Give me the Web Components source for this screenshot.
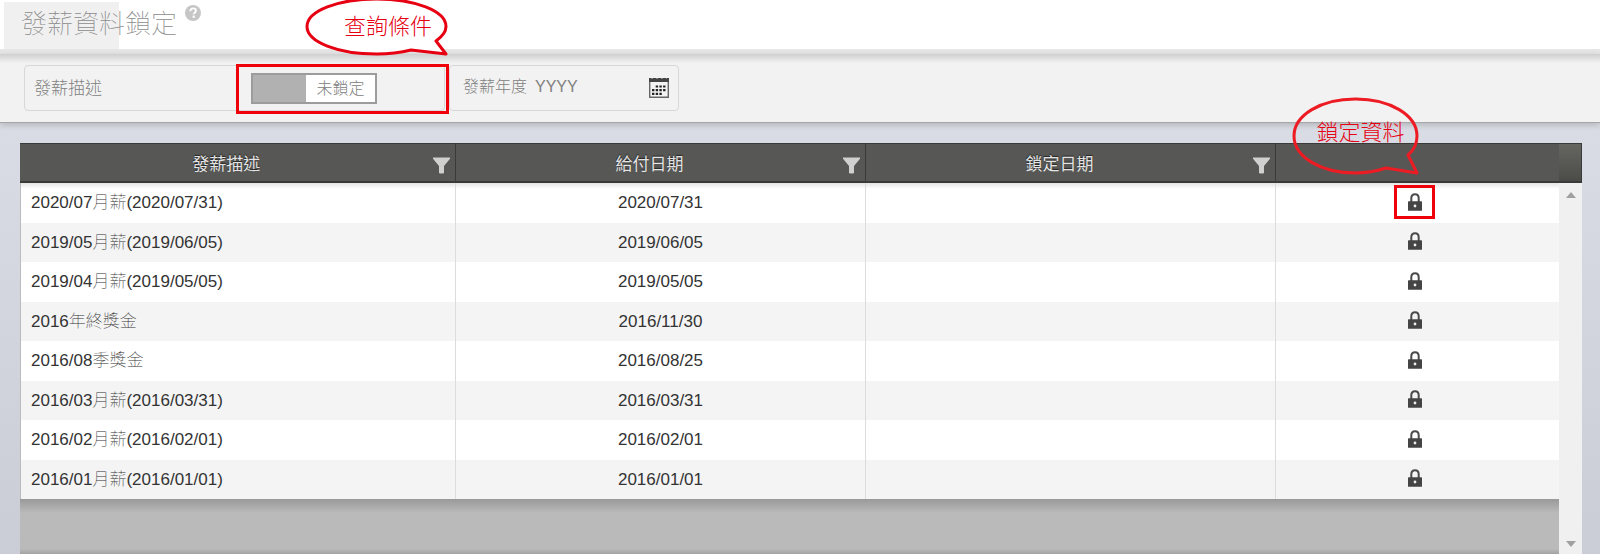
<!DOCTYPE html>
<html lang="zh-Hant">
<head>
<meta charset="UTF-8">
<meta name="viewport" content="width=device-width, initial-scale=1">
<title>發薪資料鎖定</title>
<style>
    body {
        margin: 0;
        min-height: 100vh;
        display: flex;
        flex-direction: column;
        overflow-x: hidden;
        font-family: "Liberation Sans", "Noto Sans CJK TC", sans-serif;
        font-size: 17px;
        background: linear-gradient(#d9dce4 130px, #cacdd5);
    }
</style>
</head>
<body>
    <page-title>發薪資料鎖定</page-title>

    <filter-bar>
        <text-field placeholder="發薪描述" wide>
            <toggle-switch>未鎖定</toggle-switch>
        </text-field>
        <text-field label="發薪年度" placeholder="YYYY" calendar></text-field>
    </filter-bar>

    <pay-grid></pay-grid>

    <script>
    const icons = {
        help: `<svg width="16" height="16" viewBox="0 0 16 16"><circle cx="8" cy="8" r="8" fill="#c6c6c6"/><path d="M5.3 6.2C5.3 4.4 6.5 3.4 8.1 3.4c1.6 0 2.8.9 2.8 2.3 0 1.9-2.2 1.9-2.2 3.6" fill="none" stroke="#fff" stroke-width="1.9"/><rect x="7.6" y="10.6" width="2.2" height="2.2" fill="#fff"/></svg>`,
        filter: `<svg width="17" height="17" viewBox="0 0 17 17"><path d="M0 .5h17v1.2L11 9V16l-1 .5H7L6 16V9L0 1.7z" fill="#d0d0d0"/></svg>`,
        lock: `<svg width="14" height="18" viewBox="0 0 14 18"><path d="M3.3 9V5.2C3.3 2.7 4.8 1.2 7 1.2s3.7 1.5 3.7 4V9" fill="none" stroke="#4a4a4a" stroke-width="2"/><rect x="0" y="8.3" width="14" height="9.5" rx=".6" fill="#444"/><circle cx="7" cy="13" r="1.4" fill="#eee"/></svg>`,
        calendar: `<svg width="20" height="21" viewBox="0 0 20 21"><path d="M.7 2h18.6v18.3H.7z" fill="#f4f4f4" stroke="#666" stroke-width="1.4"/><path d="M0 1h2v1h2V1h3v1h2V1h3v1h2V1h3v1h1V1h2v4H0z" fill="#444"/><path d="M6.7 9.5h10M3 13.2H17M3 16.9H13" stroke="#222" stroke-width="2.2" stroke-dasharray="2.4 1.3" fill="none"/></svg>`
    }

    class PageTitle extends HTMLElement {
        constructor() {
            super()
            const shadow = this.attachShadow({mode: 'open'})
            shadow.innerHTML = `
                <style>
                    :host {
                        display: block;
                        background: #fff;
                        border-bottom: 5px solid #e6e6e6;
                        color: #8c8c8c;
                    }
                    header {
                        display: flex;
                        align-items: flex-start;
                        gap: 8px;
                        height: 49px;
                        padding-left: 21px;
                        background: linear-gradient(#f0f0f0, #f0f0f0) 4px 2px / 115px 48px no-repeat;
                    }
                    h1 {
                        margin: 0;
                        padding-top: 6px;
                        font-size: 26px;
                        line-height: 36px;
                        font-weight: 100;
                    }
                    a { display: flex; padding-top: 5px; }
                </style>
                <header>
                    <h1><slot></slot></h1>
                    <a href="#help" aria-label="說明">${icons.help}</a>
                </header>
            `
        }
    }
    customElements.define('page-title', PageTitle)

    class FilterBar extends HTMLElement {
        constructor() {
            super()
            const shadow = this.attachShadow({mode: 'open'})
            shadow.innerHTML = `
                <style>
                    :host {
                        display: flex;
                        gap: 4px;
                        padding: 11px 24px;
                        background: linear-gradient(#cfcfcf, #f2f2f2 9px);
                        border-bottom: 1px solid #a6a6a6;
                        box-shadow: 0 2px 6px rgba(0, 0, 0, .18);
                    }
                </style>
                <slot></slot>
            `
        }
    }
    customElements.define('filter-bar', FilterBar)

    class TextField extends HTMLElement {
        constructor() {
            super()
            this.attachShadow({mode: 'open'})
        }
        connectedCallback() {
            const label = this.getAttribute('label')
            const placeholder = this.getAttribute('placeholder')
            this.shadowRoot.innerHTML = `
                <style>
                    :host {
                        display: flex;
                        align-items: center;
                        box-sizing: border-box;
                        width: 230px;
                        height: 46px;
                        padding: 0 9px;
                        border: 1px solid #d8d8d8;
                        border-radius: 4px;
                        color: #808080;
                        font-size: 16px;
                        font-weight: 300;
                    }
                    :host([wide]) { width: 421px; font-size: 17px; }
                    :host(:not([wide])) { padding-left: 13px; }
                    label { flex: none; margin-right: 8px; line-height: 40px; padding-bottom: 2px; }
                    input {
                        flex: 1;
                        min-width: 0;
                        height: 40px;
                        box-sizing: border-box;
                        padding: 0 0 2px;
                        border: 0;
                        outline: 0;
                        background: none;
                        font: inherit;
                        color: inherit;
                    }
                    :host([wide]) input { padding: 2px 0 0; }
                    input::placeholder { color: #808080; opacity: 1; }
                    button { display: flex; padding: 0 0 2px; border: 0; background: none; }
                </style>
                ${label ? `<label for="campo">${label}</label>` : ''}
                <input id="campo" type="text" placeholder="${placeholder}" ${label ? '' : `aria-label="${placeholder}"`}>
                ${this.hasAttribute('calendar') ? `<button type="button" aria-label="日曆">${icons.calendar}</button>` : ''}
                <slot></slot>
            `
        }
    }
    customElements.define('text-field', TextField)

    // ellipse with a tail at the lower right corner
    class CallOut extends HTMLElement {
        constructor() {
            super()
            const shadow = this.attachShadow({mode: 'open'})
            shadow.innerHTML = `
                <style>
                    :host {
                        display: block;
                        position: absolute;
                        z-index: 2;
                        pointer-events: none;
                        color: #e60012;
                        font-size: 22px;
                        line-height: 30px;
                        font-weight: 300;
                        white-space: nowrap;
                    }
                    svg { display: block; overflow: visible; }
                    path { stroke: #e60012; stroke-width: 3; stroke-linejoin: round; }
                    span { position: absolute; }
                    .round { display: none; }
                    :host([shape="round"]) .round { display: block; }
                    :host([shape="round"]) .flat { display: none; }
                    :host([shape="flat"]) span { left: 38px; top: 13px; }
                    :host([shape="round"]) span { left: 23px; top: 20px; }
                    :host([shape="flat"]) path { fill: #fff; }
                    :host([shape="round"]) path { fill: none; stroke: #ed1c24; }
                </style>
                <svg class="flat" width="141" height="58" viewBox="0 0 141 58"><path d="M130 42C137 37 140 32 140 27.5 140 12 109 0 70.5 0S1 12 1 27.5 32 55 70.5 55C83 55 95 53.5 105 51L140 55z"/></svg>
                <svg class="round" width="126" height="77" viewBox="0 0 126 77"><path d="M115 57C121 52 124 45 124 38 124 17 97 1 62.5 1S1 17 1 38 28 75 62.5 75C74 75 84 73 93 70L124 75z"/></svg>
                <span><slot></slot></span>
            `
        }
    }
    customElements.define('call-out', CallOut)

    class ToggleSwitch extends HTMLElement {
        constructor() {
            super()
            const shadow = this.attachShadow({mode: 'open'})
            shadow.innerHTML = `
                <style>
                    :host { display: block; position: relative; width: 199px; }
                    label {
                        display: grid;
                        grid-template-columns: 53px 1fr;
                        box-sizing: border-box;
                        width: 126px;
                        height: 31px;
                        margin-left: 15px;
                        border: 2px solid #9c9c9c;
                        background: #fff;
                        font-size: 16px;
                        line-height: 27px;
                        text-align: center;
                    }
                    input { appearance: none; margin: 0; background: #b1b1b1; }
                    .mark {
                        position: absolute;
                        top: -9px;
                        left: 0;
                        box-sizing: border-box;
                        width: 213px;
                        height: 50px;
                        border: 3px solid #f00008;
                        pointer-events: none;
                    }
                    call-out { left: 70px; top: -74px; }
                </style>
                <label><input type="checkbox" role="switch"><slot></slot></label>
                <div class="mark"></div>
                <call-out shape="flat">查詢條件</call-out>
            `
        }
    }
    customElements.define('toggle-switch', ToggleSwitch)

    const rows = [
        ['2020/07月薪(2020/07/31)', '2020/07/31'],
        ['2019/05月薪(2019/06/05)', '2019/06/05'],
        ['2019/04月薪(2019/05/05)', '2019/05/05'],
        ['2016年終獎金', '2016/11/30'],
        ['2016/08季獎金', '2016/08/25'],
        ['2016/03月薪(2016/03/31)', '2016/03/31'],
        ['2016/02月薪(2016/02/01)', '2016/02/01'],
        ['2016/01月薪(2016/01/01)', '2016/01/01']
    ]

    class PayGrid extends HTMLElement {
        constructor() {
            super()
            const shadow = this.attachShadow({mode: 'open'})
            const head = text => `<th><div><span>${text}</span><button type="button" aria-label="篩選${text}">${icons.filter}</button></div></th>`
            shadow.innerHTML = `
                <style>
                    :host {
                        display: flex;
                        flex: 1;
                        margin: 20px 18px 0 20px;
                    }
                    .main {
                        flex: 1;
                        display: flex;
                        flex-direction: column;
                        background: #bababa;
                    }
                    table {
                        width: 100%;
                        border-collapse: separate;
                        border-spacing: 0;
                        table-layout: fixed;
                    }
                    .c1 { width: 28.3%; }
                    .c2 { width: 26.7%; }
                    .c3 { width: 26.6%; }
                    th {
                        height: 40px;
                        box-sizing: border-box;
                        padding: 0 5px 0 0;
                        background: #575755;
                        border: solid #3a3a38;
                        border-width: 1px 1px 2px 0;
                        color: #e4e4e4;
                        font-weight: 400;
                        text-shadow: 0 -1px 1px #222;
                    }
                    th:last-child { border-right: 0; }
                    th div { display: flex; align-items: center; }
                    th span { flex: 1; }
                    th button { display: flex; padding: 5px 0 0; border: 0; background: none; }
                    td {
                        height: 39px;
                        box-sizing: border-box;
                        padding: 0;
                        background: #fff;
                        border-right: 1px solid #dcdcdc;
                        color: #333;
                        font-weight: 100;
                        line-height: 20px;
                        text-align: center;
                    }
                    td:first-child {
                        padding: 0 0 0 10px;
                        border-left: 1px solid #bbb;
                        text-align: left;
                    }
                    td:last-child { padding: 0 4px 4px 0; border-right: 0; }
                    tr:nth-child(odd) td { height: 40px; }
                    tr:nth-child(even) td { background: #f4f4f4; }
                    tbody tr:first-child td { background: linear-gradient(#e4e4e4, #fff 6px); }
                    .lock {
                        display: inline-flex;
                        position: relative;
                        padding: 0;
                        border: 0;
                        background: none;
                        font: inherit;
                        vertical-align: middle;
                    }
                    .mark {
                        position: absolute;
                        left: -14px;
                        top: -8px;
                        width: 35px;
                        height: 28px;
                        border: 3px solid #f00008;
                    }
                    call-out { left: -115px; top: -95px; }
                    .empty {
                        flex: 1;
                        min-height: 54px;
                        background:
                            linear-gradient(#999, rgba(153, 153, 153, 0)) 0 0 / 100% 14px no-repeat,
                            linear-gradient(rgba(153, 153, 153, 0), #a2a2a2) 0 100% / 100% 5px no-repeat;
                    }
                    .scroll {
                        display: flex;
                        flex-direction: column;
                        align-items: center;
                        justify-content: space-between;
                        width: 23px;
                        padding-bottom: 7px;
                        background: #f0f0f0;
                    }
                    .corner {
                        box-sizing: border-box;
                        width: 100%;
                        height: 40px;
                        background: linear-gradient(#666661, #4b4b48);
                        border: solid #3a3a38;
                        border-width: 1px 1px 2px 0;
                    }
                    .scroll svg { fill: #a0a0a0; }
                    .up { margin: 9px 0 auto; }
                </style>
                <div class="main">
                    <table>
                        <colgroup><col class="c1"><col class="c2"><col class="c3"><col></colgroup>
                        <thead><tr>${head('發薪描述')}${head('給付日期')}${head('鎖定日期')}<th></th></tr></thead>
                        <tbody>
                            ${rows.map((row, i) => `<tr><td>${row[0]}</td><td>${row[1]}</td><td></td><td>
                                <button type="button" class="lock" aria-label="鎖定">${icons.lock}${i === 0 ? '<span class="mark"></span><call-out shape="round">鎖定資料</call-out>' : ''}</button>
                            </td></tr>`).join('')}
                        </tbody>
                    </table>
                    <div class="empty"></div>
                </div>
                <div class="scroll">
                    <div class="corner"></div>
                    <svg class="up" width="10" height="6"><path d="M0 6L5 0l5 6z"/></svg>
                    <svg width="10" height="6"><path d="M0 0h10L5 6z"/></svg>
                </div>
            `
        }
    }
    customElements.define('pay-grid', PayGrid)
    </script>
</body>
</html>
